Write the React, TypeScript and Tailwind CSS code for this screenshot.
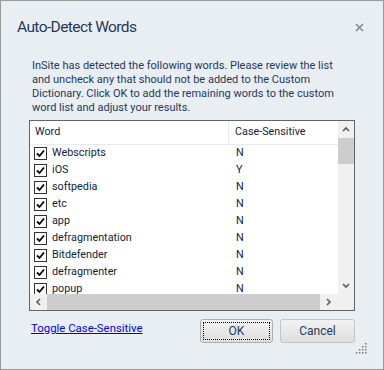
const words = [
  { w: "Webscripts", c: "N" },
  { w: "iOS", c: "Y" },
  { w: "softpedia", c: "N" },
  { w: "etc", c: "N" },
  { w: "app", c: "N" },
  { w: "defragmentation", c: "N" },
  { w: "Bitdefender", c: "N" },
  { w: "defragmenter", c: "N" },
  { w: "popup", c: "N" },
]

const Check = () => (
  <div className="w-[13px] h-[13px] border border-[#333333] bg-white flex items-center justify-center shrink-0">
    <svg width="9" height="9" viewBox="0 0 9 9">
      <path d="M1 4.5 L3.5 7 L8 1.5" fill="none" stroke="#000" strokeWidth="1.8" />
    </svg>
  </div>
)

const Chevron = ({ dir }: { dir: "up" | "down" | "left" | "right" }) => {
  const d = {
    up: "M1 5 L4 2 L7 5",
    down: "M1 2 L4 5 L7 2",
    left: "M5 1 L2 4 L5 7",
    right: "M2 1 L5 4 L2 7",
  }[dir]
  return (
    <svg width="8" height="8" viewBox="0 0 8 8">
      <path d={d} fill="none" stroke="#606060" strokeWidth="1.7" />
    </svg>
  )
}

export default function App() {
  return (
    <div
      className="w-[384px] h-[370px] border border-[#9a9a9a] bg-[#e9eef3] flex flex-col text-[#1e395b]"
      style={{ fontFamily: '"Segoe UI", Roboto, "Open Sans", sans-serif' }}
    >
      <div className="flex justify-between items-center pl-[16px] pr-[19px] pt-[13px] h-[38px]">
        <span className="text-[15.5px] tracking-[-0.6px] leading-[24px] text-[#1e395b]">Auto-Detect Words</span>
        <svg width="9" height="9" viewBox="0 0 9 9" className="mt-[2px]">
          <path d="M1 1 L8 8 M8 1 L1 8" stroke="#8a8a8a" strokeWidth="1.6" />
        </svg>
      </div>

      <div className="ml-[31px] mt-[20px] text-[11px] leading-[14px] text-[#1e395b] whitespace-nowrap">
        <div>InSite has detected the following words. Please review the list</div>
        <div>and uncheck any that should not be added to the Custom</div>
        <div>Dictionary. Click OK to add the remaining words to the custom</div>
        <div>word list and adjust your results.</div>
      </div>

      <div className="ml-[28px] mt-[5px] w-[326px] h-[191px] border border-[#646464] bg-white flex flex-col">
        <div className="flex flex-1 min-h-0">
          <div className="flex-1 overflow-hidden text-[10.8px] text-[#0f1e3d]">
            <div className="flex h-[24px] border-b border-[#e3ebf5] items-center">
              <div className="w-[199px] pl-[5px] h-full flex items-center border-r border-[#e3ebf5]">Word</div>
              <div className="pl-[6px]">Case-Sensitive</div>
            </div>
            {words.map((r) => (
              <div key={r.w} className="flex h-[17px] items-center">
                <div className="w-[200px] pl-[4px] flex items-center gap-[5px]">
                  <Check />
                  <span>{r.w}</span>
                </div>
                <div className="pl-[6px]">{r.c}</div>
              </div>
            ))}
          </div>
          <div className="w-[16px] bg-[#f0f0f0] flex flex-col">
            <div className="h-[17px] flex items-center justify-center"><Chevron dir="up" /></div>
            <div className="h-[26px] bg-[#cdcdcd]" />
            <div className="flex-1" />
            <div className="h-[17px] flex items-center justify-center"><Chevron dir="down" /></div>
          </div>
        </div>
        <div className="h-[16px] flex bg-[#f0f0f0]">
          <div className="w-[17px] flex items-center justify-center"><Chevron dir="left" /></div>
          <div className="w-[273px] bg-[#cdcdcd]" />
          <div className="w-[18px] flex items-center justify-center"><Chevron dir="right" /></div>
          <div className="flex-1" />
        </div>
      </div>

      <div className="flex items-start mt-[8px] pl-[30px] pr-[28px]">
        <a href="#" className="text-[11.4px] leading-[14px] mt-[2px] text-[#0000ff] underline">Toggle Case-Sensitive</a>
        <div className="flex-1" />
        <button className="w-[73px] h-[24px] rounded-[3px] border border-[#adadad] bg-gradient-to-b from-[#f2f2f2] to-[#dedede] p-[2px]">
          <div className="w-full h-full border border-dotted border-[#000] flex items-center justify-center text-[12px] text-[#1e395b]">OK</div>
        </button>
        <button className="ml-[7px] w-[75px] h-[24px] rounded-[3px] border border-[#c4c4c4] bg-gradient-to-b from-[#f2f2f2] to-[#dedede] text-[12px] text-[#1e395b]">Cancel</button>
      </div>

      <div className="flex justify-end pr-[16px]">
        <svg width="11" height="11" viewBox="0 0 11 11">
          {[[9, 0], [9, 3], [6, 3], [9, 6], [6, 6], [3, 6], [9, 9], [6, 9], [3, 9], [0, 9]].map(([x, y]) => (
            <rect key={`${x}-${y}`} x={x} y={y} width="1.5" height="1.5" fill="#7a7a7a" />
          ))}
        </svg>
      </div>
    </div>
  )
}
